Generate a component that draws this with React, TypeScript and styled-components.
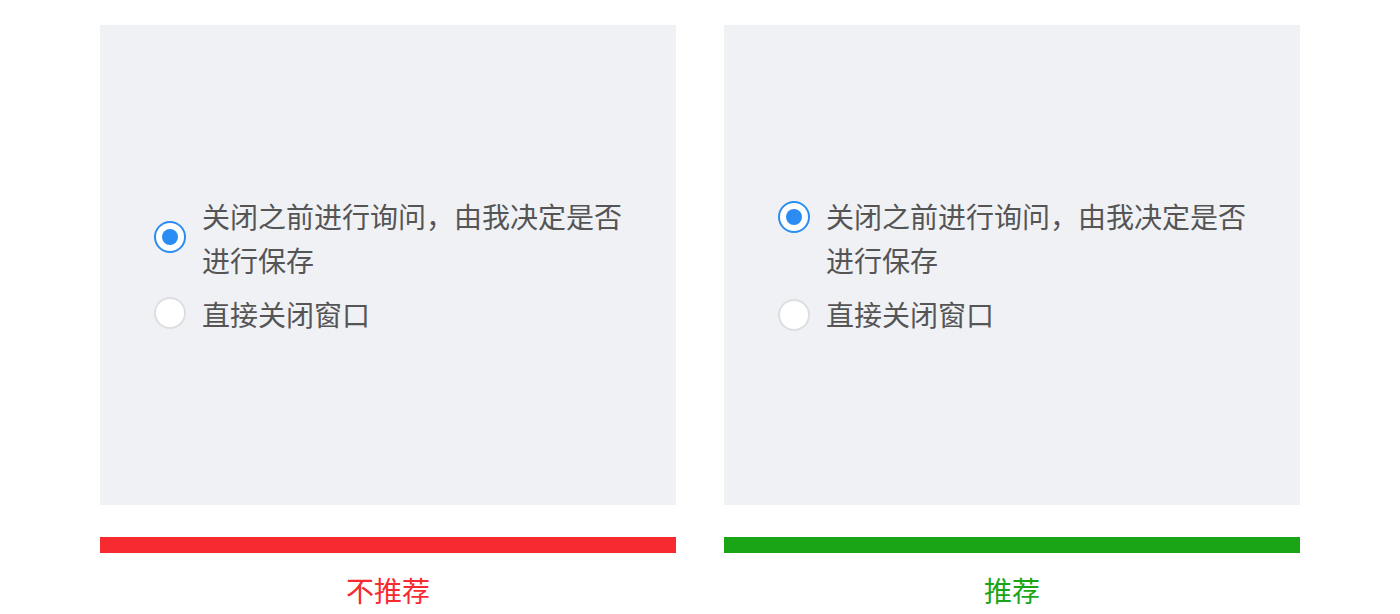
import React from "react";
import styled, { createGlobalStyle } from "styled-components";

const GlobalStyle = createGlobalStyle`
  html, body {
    margin: 0;
    padding: 0;
    background: #fff;
    font-family: "Noto Sans CJK SC", "Noto Sans", sans-serif;
  }
`;

type Align = "center" | "top";

interface Example {
  align: Align;
  label: string;
  color: string;
}

const examples: Example[] = [
  { align: "center", label: "不推荐", color: "#f72a30" },
  { align: "top", label: "推荐", color: "#1aa516" },
];

const App: React.FC = () => (
  <>
    <GlobalStyle />
    <Page>
      {examples.map((ex) => (
        <Column key={ex.label}>
          <Panel>
            <Group>
              <Option $align={ex.align}>
                <Radio $checked $align={ex.align}>
                  <Dot />
                </Radio>
                <OptionText>关闭之前进行询问，由我决定是否进行保存</OptionText>
              </Option>
              <Option $align={ex.align}>
                <Radio $align={ex.align} />
                <OptionText>直接关闭窗口</OptionText>
              </Option>
            </Group>
          </Panel>
          <Bar $color={ex.color} />
          <Label $color={ex.color}>{ex.label}</Label>
        </Column>
      ))}
    </Page>
  </>
);

const Page = styled.div`
  display: flex;
  justify-content: center;
  gap: 48px;
  padding-top: 25px;
`;

const Column = styled.div`
  width: 576px;
  display: flex;
  flex-direction: column;
`;

const Panel = styled.div`
  height: 480px;
  background: #f0f1f5;
  display: flex;
  align-items: center;
  padding: 0 54px;
  box-sizing: border-box;
`;

const Group = styled.div`
  display: flex;
  flex-direction: column;
  gap: 10px;
  width: 100%;
`;

const Option = styled.div<{ $align: Align }>`
  display: flex;
  align-items: ${(p) => (p.$align === "center" ? "center" : "flex-start")};
  gap: 16px;
`;

const Radio = styled.div<{ $checked?: boolean; $align: Align }>`
  flex: none;
  width: 32px;
  height: 32px;
  margin-top: ${(p) => (p.$align === "center" ? "-2px" : "7px")};
  box-sizing: border-box;
  border-radius: 50%;
  background: #fff;
  border: 2px solid ${(p) => (p.$checked ? "#2b8cf3" : "#dcdee2")};
  display: flex;
  align-items: center;
  justify-content: center;
`;

const Dot = styled.span`
  width: 16px;
  height: 16px;
  border-radius: 50%;
  background: #2b8cf3;
`;

const OptionText = styled.div`
  font-size: 28px;
  line-height: 44px;
  color: #555;
  flex: 1;
`;

const Bar = styled.div<{ $color: string }>`
  height: 16px;
  margin-top: 32px;
  background: ${(p) => p.$color};
`;

const Label = styled.div<{ $color: string }>`
  text-align: center;
  font-size: 28px;
  line-height: 40px;
  margin-top: 17px;
  color: ${(p) => p.$color};
`;

export default App;
